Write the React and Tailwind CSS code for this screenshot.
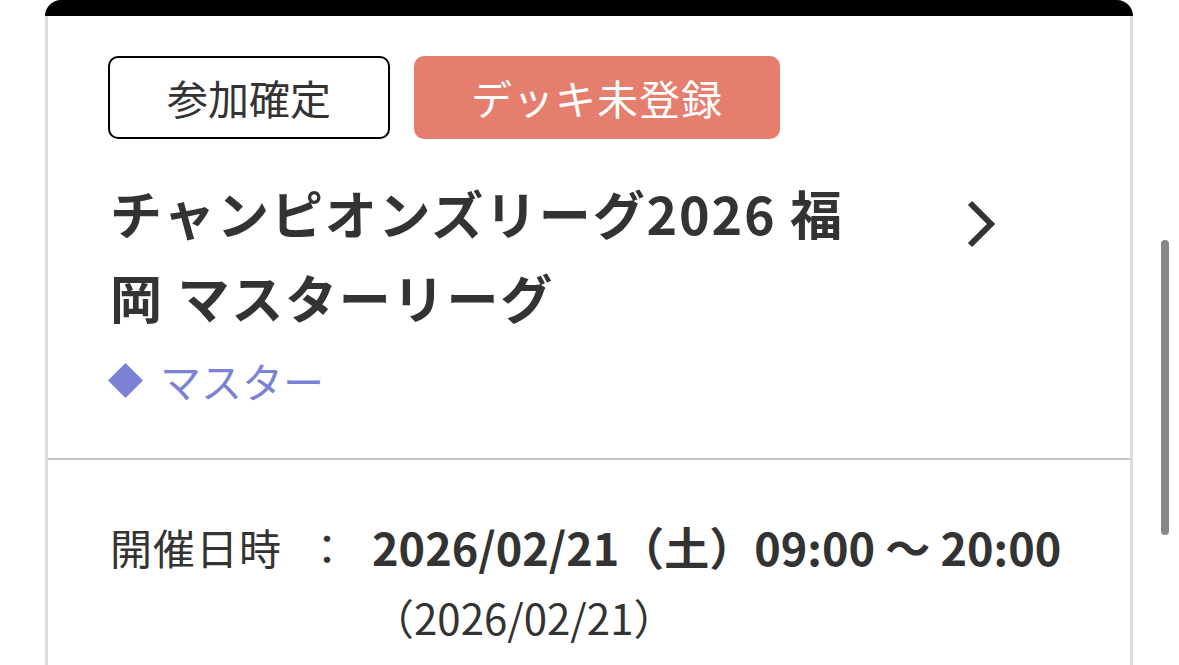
const Badge = ({ children, filled }) =>
  filled ? (
    <div className="h-[83px] px-[57px] flex items-center rounded-[10px] bg-[#e67e6e] text-white text-[41px] tracking-[1px] leading-none">
      {children}
    </div>
  ) : (
    <div className="h-[83px] px-[57px] flex items-center rounded-[10px] border-2 border-black text-[#333] text-[41px] leading-none">
      {children}
    </div>
  );

export default function App() {
  return (
    <div className="relative min-h-screen bg-white overflow-hidden font-['Noto_Sans_CJK_JP','Noto_Sans',sans-serif]">
      <div className="ml-[45px] w-[1088px]">
        {/* header strip */}
        <div className="h-4 bg-black rounded-t-2xl" />

        <div className="border-x-[3px] border-[#dcdcdc]">
          <div className="pl-[60px] pt-10 pb-[54px]">
            {/* status badges */}
            <div className="flex gap-6">
              <Badge>参加確定</Badge>
              <Badge filled>デッキ未登録</Badge>
            </div>

            {/* title */}
            <div className="mt-8 flex items-start">
              <h1 className="w-[758px] pl-[2px] text-[52px] tracking-[1.8px] leading-[84px] font-bold text-[#333]">
                チャンピオンズリーグ2026 福岡 マスターリーグ
              </h1>
              <svg className="ml-[100px] mt-[29px] w-[30px] h-[48px]" viewBox="0 0 30 48" fill="none">
                <polyline points="4,3 25,24 4,45" stroke="#333" strokeWidth="6" strokeLinejoin="miter" />
              </svg>
            </div>

            {/* category */}
            <div className="mt-[17px] flex items-center gap-[17px] h-12 text-[41px] leading-[48px] text-[#7b82d6]">
              <svg className="w-[35px] h-[35px]" viewBox="0 0 35 35">
                <polygon points="17.5,0 35,17.5 17.5,35 0,17.5" fill="#7b82d6" />
              </svg>
              <span>マスター</span>
            </div>
          </div>

          <div className="h-[2px] bg-[#c4c4c4]" />

          {/* schedule */}
          <div className="pl-[62px] pt-[52px] pb-10 flex items-start text-[#333]">
            <span className="text-[42px] tracking-[1px] leading-[70px]">開催日時</span>
            <span className="ml-[24px] mr-[24px] text-[42px] leading-[70px]">：</span>
            <div>
              <p className="text-[45px] leading-[70px] font-bold">2026/02/21（土）09:00 〜 20:00</p>
              <p className="text-[42px] leading-[70px]">（2026/02/21）</p>
            </div>
          </div>
        </div>
      </div>

      {/* overlay scrollbar */}
      <div className="absolute left-[1161px] top-[240px] w-2 h-[295px] rounded-full bg-[#888]" />
    </div>
  );
}
